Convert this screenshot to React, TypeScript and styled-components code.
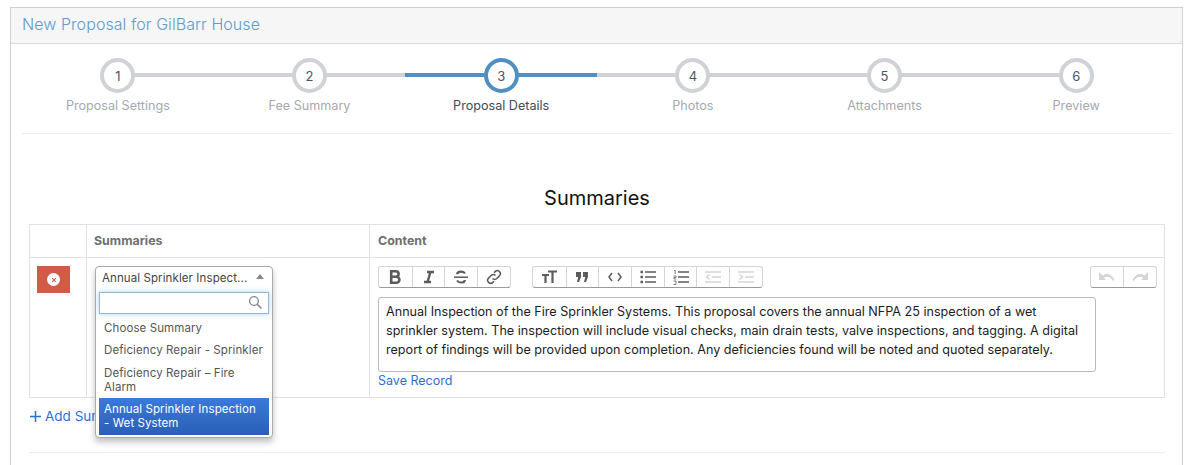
import React from "react";
import styled, { createGlobalStyle } from "styled-components";
import { FaTimes } from "react-icons/fa";

const GlobalStyle = createGlobalStyle`
  html, body {
    margin: 0;
    height: 465px;
    overflow: hidden;
    background: #fff;
    font-family: Inter, "Liberation Sans", sans-serif;
  }
`;

const Page = styled.div`
  padding: 7px 1px 0 10px;
`;

const Panel = styled.div`
  border: 1px solid #cfd0d2;
  border-bottom: 0;
  height: 458px;
  box-sizing: border-box;
`;

const PanelHeader = styled.div`
  height: 36px;
  box-sizing: border-box;
  background: #f6f6f6;
  border-bottom: 1px solid #d8d8d8;
  padding: 7px 11px 0;
  font-size: 16px;
  font-weight: 300;
  letter-spacing: 0.07px;
  line-height: 19px;
  color: #5d9ccb;
`;

const Steps = styled.div`
  display: flex;
  margin: 0 9px 0 11px;
  padding: 14px 1px 19px 0;
  border-bottom: 1px solid #eeeeee;
`;

const Step = styled.div`
  flex: 1;
  position: relative;
  display: flex;
  flex-direction: column;
  align-items: center;
`;

const StepLine = styled.div<{ $active?: boolean; $first?: boolean; $last?: boolean }>`
  position: absolute;
  top: 15px;
  height: 4px;
  left: ${(p) => (p.$first ? "50%" : "0")};
  right: ${(p) => (p.$last ? "50%" : "0")};
  background: ${(p) => (p.$active ? "#4f8fc2" : "#cfd2d7")};
`;

const StepCircle = styled.div<{ $active?: boolean }>`
  position: relative;
  width: 35px;
  height: 35px;
  box-sizing: border-box;
  border-radius: 50%;
  background: #fff;
  border: 4px solid ${(p) => (p.$active ? "#4f8fc2" : "#cfd2d7")};
  display: flex;
  align-items: center;
  justify-content: center;
  font-size: 13px;
  color: #4a5568;
`;

const StepLabel = styled.div<{ $active?: boolean }>`
  margin-top: 4px;
  font-size: 12.6px;
  line-height: 17px;
  color: ${(p) => (p.$active ? "#3e4a5c" : "#a3a9b2")};
`;

const Section = styled.div`
  padding: 0 17px 0 18px;
`;

const SectionTitle = styled.h2`
  margin: 0;
  padding-top: 52px;
  height: 38px;
  font-size: 20px;
  line-height: 24px;
  font-weight: 400;
  color: #111;
  text-align: center;
`;

const Table = styled.div`
  display: grid;
  grid-template-columns: 57px 283px 1fr;
  grid-template-rows: 33px 140px;
  height: 174px;
  box-sizing: border-box;
  border: 1px solid #e2e2e2;
`;

const HeadCell = styled.div<{ $last?: boolean; $mid?: boolean }>`
  border-bottom: 1px solid #e2e2e2;
  border-right: ${(p) => (p.$last ? "0" : "1px solid #e2e2e2")};
  padding: 8px ${(p) => (p.$mid ? "7px" : "8px")} 0;
  font-size: 12.4px;
  line-height: 16px;
  font-weight: 700;
  color: #6f6f6f;
`;

const Cell = styled.div<{ $last?: boolean }>`
  position: relative;
  border-right: ${(p) => (p.$last ? "0" : "1px solid #e2e2e2")};
  padding: 8px 7px;
  ${(p) => (p.$last ? "padding: 8px 7px 8px 8px;" : "")}
`;

const DeleteButton = styled.button`
  display: flex;
  align-items: center;
  justify-content: center;
  width: 33px;
  height: 27px;
  padding: 0;
  border: 0;
  background: #d15b47;
`;

const DeleteDot = styled.span`
  display: flex;
  align-items: center;
  justify-content: center;
  width: 13px;
  height: 13px;
  border-radius: 50%;
  background: #fff;
  color: #d15b47;
  font-size: 6px;
`;

const SelectBox = styled.div`
  position: absolute;
  z-index: 5;
  left: 8px;
  top: 8px;
  width: 178px;
  height: 172px;
  box-sizing: border-box;
  border: 1px solid #aaa;
  border-radius: 4px;
  background: #fff;
  box-shadow: 0 4px 6px rgba(0, 0, 0, 0.25);
  font-size: 11.5px;
  letter-spacing: 0.1px;
  color: #555;
`;

const SelectHead = styled.div`
  display: flex;
  justify-content: space-between;
  height: 21px;
  padding: 3px 8px 0 6px;
  box-sizing: border-box;
  line-height: 16px;
  color: #444;
`;

const Caret = styled.span`
  width: 0;
  height: 0;
  margin-top: 4px;
  border-left: 4px solid transparent;
  border-right: 4px solid transparent;
  border-bottom: 5px solid #888;
`;

const SearchRow = styled.div`
  display: flex;
  justify-content: flex-end;
  margin: 4px 3px 3px;
  height: 22px;
  box-sizing: border-box;
  padding: 2px 5px 0 0;
  border: 1px solid #9fb6c9;
  box-shadow: 0 0 5px rgba(82, 168, 236, 0.55);
`;

const Option = styled.div<{ $selected?: boolean }>`
  margin: 0 3px;
  padding: 4px 5px;
  line-height: 14.3px;
  color: ${(p) => (p.$selected ? "#fff" : "#555")};
  background: ${(p) => (p.$selected ? "linear-gradient(#3b7ad9, #2a5fb8)" : "none")};
`;

const Toolbar = styled.div`
  display: flex;
  justify-content: space-between;
`;

const ToolGroups = styled.div`
  display: flex;
  gap: 21px;
`;

const ToolGroup = styled.div`
  display: flex;
  height: 22px;
  box-sizing: border-box;
  border: 1px solid #d4d4d4;
  border-bottom: 1px solid #9a9a9a;
  border-radius: 3px;
`;

const ToolButton = styled.span`
  display: flex;
  align-items: center;
  justify-content: center;
  box-sizing: border-box;
  width: 32.72px;
  border-left: 1px solid #d4d4d4;
  &:first-child {
    border-left: 0;
  }
`;

const Editor = styled.div`
  width: 718px;
  height: 75px;
  margin-top: 9px;
  box-sizing: border-box;
  border: 1px solid #bbb;
  border-radius: 3px;
  padding: 4px 12px 0 7px;
  font-size: 12.6px;
  line-height: 19px;
  color: #1c1c1c;
`;

const SaveLink = styled.a`
  display: block;
  margin-top: 1px;
  font-size: 12.5px;
  line-height: 16px;
  color: #2b6fd6;
`;

const AddLink = styled.a`
  display: flex;
  align-items: center;
  gap: 4px;
  height: 36px;
  padding-left: 1px;
  font-size: 13.5px;
  color: #2b6fd6;
`;

const Rule = styled.div`
  height: 1px;
  margin-top: 18px;
  background: #eeeeee;
`;

const Icon = ({ c, children }: { c: string; children: React.ReactNode }) => (
  <svg width="16" height="16" viewBox="0 0 16 16" fill="none" stroke={c} strokeWidth="1.5">
    {children}
  </svg>
);

const dark = "#5c5c5c";
const off = "#d5d5d5";

const steps = ["Proposal Settings", "Fee Summary", "Proposal Details", "Photos", "Attachments", "Preview"];

export default function App() {
  return (
    <Page>
      <GlobalStyle />
      <Panel>
        <PanelHeader>New Proposal for GilBarr House</PanelHeader>
        <Steps>
          {steps.map((s, i) => (
            <Step key={s}>
              <StepLine $first={i === 0} $last={i === 5} $active={i === 2} />
              <StepCircle $active={i === 2}>{i + 1}</StepCircle>
              <StepLabel $active={i === 2}>{s}</StepLabel>
            </Step>
          ))}
        </Steps>
        <Section>
          <SectionTitle>Summaries</SectionTitle>
          <Table>
            <HeadCell />
            <HeadCell $mid>Summaries</HeadCell>
            <HeadCell $last>Content</HeadCell>
            <Cell>
              <DeleteButton>
                <DeleteDot>
                  <FaTimes />
                </DeleteDot>
              </DeleteButton>
            </Cell>
            <Cell>
              <SelectBox>
                <SelectHead>
                  <span>Annual Sprinkler Inspect...</span>
                  <Caret />
                </SelectHead>
                <SearchRow>
                  <svg width="15" height="15" viewBox="0 0 15 15" fill="none" stroke="#8a8a8a" strokeWidth="1.4">
                    <circle cx="6" cy="6" r="4.4" />
                    <path d="M9.3 9.3 13.5 13.5" strokeWidth="1.7" />
                  </svg>
                </SearchRow>
                <Option>Choose Summary</Option>
                <Option>Deficiency Repair - Sprinkler</Option>
                <Option>Deficiency Repair – Fire Alarm</Option>
                <Option $selected>Annual Sprinkler Inspection - Wet System</Option>
              </SelectBox>
            </Cell>
            <Cell $last>
              <Toolbar>
                <ToolGroups>
                  <ToolGroup>
                    <ToolButton>
                      <Icon c={dark}>
                        <path d="M4.2 2.2h4.6a2.8 2.8 0 0 1 0 5.6H4.2zM4.2 7.8h5.2a3 3 0 0 1 0 6H4.2z" strokeWidth="2.6" />
                      </Icon>
                    </ToolButton>
                    <ToolButton>
                      <Icon c={dark}>
                        <path d="M6 3h7M3 13h7M9.5 3l-3 10" strokeWidth="2.4" />
                      </Icon>
                    </ToolButton>
                    <ToolButton>
                      <Icon c={dark}>
                        <path d="M1 8.2h14" />
                        <path d="M12 4.5C11 3 9.5 2.6 8 2.6 6 2.6 4.2 3.4 4.2 5.2M4 11.5c1 1.5 2.5 2 4 2 2 0 3.8-.8 3.8-2.6" strokeWidth="2.2" />
                      </Icon>
                    </ToolButton>
                    <ToolButton>
                      <Icon c={dark}>
                        <path d="M6.500 9.500a3 3 0 0 0 4.300 0l2.600-2.600a3 3 0 0 0-4.300-4.300L8 3.700M9.500 6.500a3 3 0 0 0-4.300 0L2.600 9.100a3 3 0 0 0 4.300 4.300L8 12.300" />
                      </Icon>
                    </ToolButton>
                  </ToolGroup>
                  <ToolGroup>
                    <ToolButton>
                      <Icon c={dark}>
                        <path d="M1 6h7M4.5 6v8M7 2.500h9M11.5 2.500V14" strokeWidth="2.2" />
                      </Icon>
                    </ToolButton>
                    <ToolButton>
                      <svg width="12" height="10" viewBox="0 0 12 10" fill={dark}>
                        <path d="M0 0h5v5L3 10H1l1.200-5H0zM7 0h5v5l-2 5H8l1.200-5H7z" />
                      </svg>
                    </ToolButton>
                    <ToolButton>
                      <svg width="14" height="10" viewBox="0 0 14 10" fill="none" stroke={dark} strokeWidth="1.5">
                        <path d="M4 1 1 5l3 4M10 1l3 4-3 4" />
                      </svg>
                    </ToolButton>
                    <ToolButton>
                      <Icon c={dark}>
                        <path d="M5 3h11M5 8h11M5 13h11" strokeWidth="1.3" />
                        <path d="M.5 3h2.500M.5 8h2.500M.5 13h2.500" strokeWidth="2.5" />
                      </Icon>
                    </ToolButton>
                    <ToolButton>
                      <Icon c={dark}>
                        <path d="M5 3h11M5 8h11M5 13h11" strokeWidth="1.3" />
                        <path d="M1 1.500h1.200V5M.5 7h2.500v1.500H1V10h2.200M.5 12h2.500v3.500H.5" strokeWidth="0.8" />
                      </Icon>
                    </ToolButton>
                    <ToolButton>
                      <Icon c={off}>
                        <path d="M0 3h16M7 8h9M0 13h16M4.500 5.500 1.500 8l3 2.500" />
                      </Icon>
                    </ToolButton>
                    <ToolButton>
                      <Icon c={off}>
                        <path d="M0 3h16M7 8h9M0 13h16M1.500 5.500l3 2.500-3 2.500" />
                      </Icon>
                    </ToolButton>
                  </ToolGroup>
                </ToolGroups>
                <ToolGroup>
                  <ToolButton>
                    <svg width="16" height="10" viewBox="0 0 16 10" fill={off}>
                      <path d="M0 0v8h7L4.800 5.800C7.500 3.800 11.500 4.500 14 9l1.500-1C12.500 1.800 7.500 .8 3.500 3.500z" />
                    </svg>
                  </ToolButton>
                  <ToolButton>
                    <svg width="16" height="10" viewBox="0 0 16 10" fill={off}>
                      <path d="M16 0v8H9l2.200-2.200C8.500 3.800 4.500 4.500 2 9L.5 8C3.500 1.800 8.500 .8 12.500 3.500z" />
                    </svg>
                  </ToolButton>
                </ToolGroup>
              </Toolbar>
              <Editor>
                Annual Inspection of the Fire Sprinkler Systems. This proposal covers the annual NFPA 25 inspection of a wet
                sprinkler system. The inspection will include visual checks, main drain tests, valve inspections, and tagging. A digital
                report of findings will be provided upon completion. Any deficiencies found will be noted and quoted separately.
              </Editor>
              <SaveLink>Save Record</SaveLink>
            </Cell>
          </Table>
          <AddLink>
            <svg width="11" height="11" viewBox="0 0 11 11" stroke="#2b6fd6" strokeWidth="1.5">
              <path d="M5.500 0v11M0 5.500h11" />
            </svg>
            Add Summary
          </AddLink>
          <Rule />
        </Section>
      </Panel>
    </Page>
  );
}
